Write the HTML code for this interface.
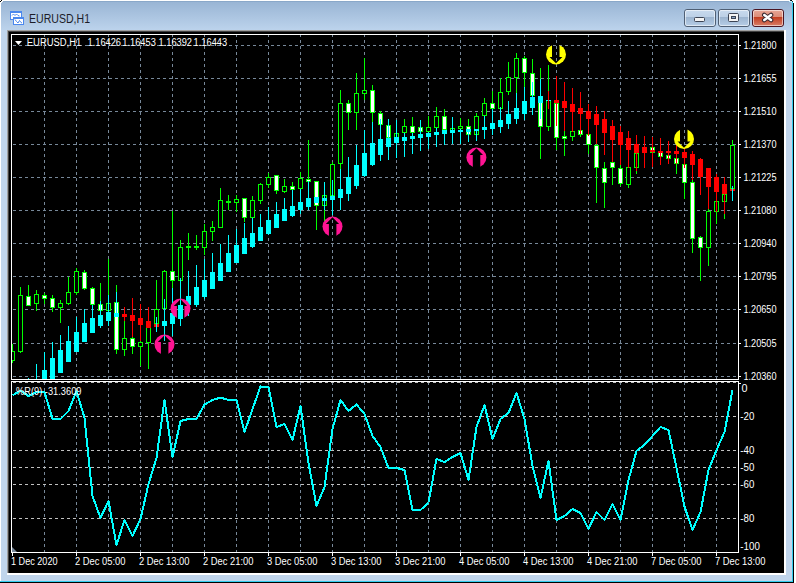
<!DOCTYPE html>
<html><head><meta charset="utf-8"><style>
html,body{margin:0;padding:0;width:796px;height:583px;overflow:hidden;background:#000}
svg{display:block}
</style></head><body>
<svg width="796" height="583" viewBox="0 0 796 583">
<defs>
<linearGradient id="tg" x1="0" y1="0" x2="0" y2="1">
<stop offset="0" stop-color="#97b3d3"/><stop offset="1" stop-color="#bcd3ec"/></linearGradient>
<linearGradient id="bt" x1="0" y1="0" x2="0" y2="1">
<stop offset="0" stop-color="#c8daee"/><stop offset="0.45" stop-color="#bcd0e6"/><stop offset="0.47" stop-color="#9db5d0"/><stop offset="1" stop-color="#b8cfe8"/></linearGradient>
<linearGradient id="ct" x1="0" y1="0" x2="0" y2="1">
<stop offset="0" stop-color="#e9a898"/><stop offset="0.45" stop-color="#db8c78"/><stop offset="0.47" stop-color="#c43f22"/><stop offset="1" stop-color="#d9826c"/></linearGradient>
<clipPath id="mainclip"><rect x="12" y="35" width="726" height="344"/></clipPath>
<clipPath id="subclip"><rect x="12" y="382" width="726" height="170"/></clipPath>
</defs>
<rect x="0" y="0" width="796" height="583" fill="#c0d5ec"/><rect x="0" y="0" width="796" height="30" fill="url(#tg)"/><rect x="0" y="0" width="796" height="1" fill="#ffffff"/><rect x="0" y="1" width="796" height="1" fill="#8aa8c9"/><rect x="0" y="0" width="1" height="583" fill="#ffffff"/><rect x="0" y="581" width="796" height="1" fill="#33ccee"/><rect x="792" y="0" width="1" height="582" fill="#33ccee"/><rect x="0" y="582" width="796" height="1" fill="#000000"/><rect x="793" y="0" width="1" height="583" fill="#000000"/><rect x="794" y="0" width="2" height="583" fill="#ffffff"/><rect x="1" y="0" width="1" height="1" fill="#000000"/><rect x="0" y="1" width="1" height="1" fill="#000000"/><rect x="1" y="1" width="2" height="1" fill="#f0f4f8"/><rect x="1" y="2" width="1" height="1" fill="#f0f4f8"/><rect x="792" y="0" width="2" height="2" fill="#ffffff"/><rect x="793" y="2" width="1" height="1" fill="#ffffff"/><rect x="792" y="1" width="1" height="1" fill="#104048"/><rect x="790" y="0" width="1" height="1" fill="#0a2a30"/><rect x="791" y="0" width="1" height="1" fill="#000000"/><rect x="789" y="1" width="3" height="1" fill="#c0f0ff"/><rect x="791" y="2" width="1" height="1" fill="#90e8f8"/><rect x="7" y="30" width="778" height="1" fill="#a0a0a0"/><rect x="7" y="30" width="1" height="544" fill="#a0a0a0"/><rect x="8" y="31" width="776" height="1" fill="#404040"/><rect x="8" y="31" width="1" height="542" fill="#404040"/><rect x="784" y="30" width="2" height="545" fill="#ffffff"/><rect x="7" y="573" width="779" height="2" fill="#ffffff"/><rect x="9" y="32" width="775" height="541" fill="#000000"/><text x="29" y="23" font-family="Liberation Sans" font-size="12.3" fill="#1c1c28" textLength="61" lengthAdjust="spacingAndGlyphs">EURUSD,H1</text><g shape-rendering="crispEdges"><rect x="10" y="11" width="12" height="9" fill="#4a88ee"/><rect x="11" y="13" width="10" height="6" fill="#ffffff"/><rect x="13" y="17" width="11" height="8" fill="#4a88ee"/><rect x="14" y="19" width="9" height="5" fill="#ffffff"/></g><polyline points="12,15.5 13.5,14 15,15.5 16.5,14 18,15.5 19.5,16" fill="none" stroke="#4a88ee" stroke-width="1"/><polyline points="15,19.5 16.5,21.5 18,23 19.5,20.5 21,22.5 22,23" fill="none" stroke="#4a88ee" stroke-width="1"/><rect x="684.5" y="9.5" width="31" height="17" rx="2.5" ry="2.5" fill="url(#bt)" stroke="#4f5f74" stroke-width="1"/><rect x="685.5" y="10.5" width="29" height="15" rx="1.5" ry="1.5" fill="none" stroke="rgba(255,255,255,0.55)" stroke-width="1"/><rect x="718.5" y="9.5" width="31" height="17" rx="2.5" ry="2.5" fill="url(#bt)" stroke="#4f5f74" stroke-width="1"/><rect x="719.5" y="10.5" width="29" height="15" rx="1.5" ry="1.5" fill="none" stroke="rgba(255,255,255,0.55)" stroke-width="1"/><rect x="752.5" y="9.5" width="31" height="17" rx="2.5" ry="2.5" fill="url(#ct)" stroke="#4a1522" stroke-width="1"/><rect x="753.5" y="10.5" width="29" height="15" rx="1.5" ry="1.5" fill="none" stroke="rgba(255,255,255,0.55)" stroke-width="1"/><rect x="694.5" y="17.5" width="10" height="4" rx="1" fill="#f4f4f4" stroke="#3c4454" stroke-width="1"/><rect x="728.5" y="13.5" width="10" height="8" rx="1" fill="#f4f4f4" stroke="#3c4454" stroke-width="1"/><rect x="731.5" y="16.5" width="4" height="2" fill="#8aa4c4" stroke="#3c4454" stroke-width="1"/><path d="M764.3,15 L771,20 M771,15 L764.3,20" stroke="#3a2a30" stroke-width="4.6" stroke-linecap="round"/><path d="M764.3,15 L771,20 M771,15 L764.3,20" stroke="#ffffff" stroke-width="2.6" stroke-linecap="round"/><g shape-rendering="crispEdges"><line x1="13" y1="45.5" x2="738" y2="45.5" stroke="#778899" stroke-width="1" stroke-dasharray="3 3"/><line x1="13" y1="78.5" x2="738" y2="78.5" stroke="#778899" stroke-width="1" stroke-dasharray="3 3"/><line x1="13" y1="111.5" x2="738" y2="111.5" stroke="#778899" stroke-width="1" stroke-dasharray="3 3"/><line x1="13" y1="144.5" x2="738" y2="144.5" stroke="#778899" stroke-width="1" stroke-dasharray="3 3"/><line x1="13" y1="177.5" x2="738" y2="177.5" stroke="#778899" stroke-width="1" stroke-dasharray="3 3"/><line x1="13" y1="210.5" x2="738" y2="210.5" stroke="#778899" stroke-width="1" stroke-dasharray="3 3"/><line x1="13" y1="243.5" x2="738" y2="243.5" stroke="#778899" stroke-width="1" stroke-dasharray="3 3"/><line x1="13" y1="276.5" x2="738" y2="276.5" stroke="#778899" stroke-width="1" stroke-dasharray="3 3"/><line x1="13" y1="309.5" x2="738" y2="309.5" stroke="#778899" stroke-width="1" stroke-dasharray="3 3"/><line x1="13" y1="343.5" x2="738" y2="343.5" stroke="#778899" stroke-width="1" stroke-dasharray="3 3"/><line x1="13" y1="376.5" x2="738" y2="376.5" stroke="#778899" stroke-width="1" stroke-dasharray="3 3"/><line x1="44.5" y1="35" x2="44.5" y2="379" stroke="#778899" stroke-width="1" stroke-dasharray="3 3" stroke-dashoffset="1"/><line x1="76.5" y1="35" x2="76.5" y2="379" stroke="#778899" stroke-width="1" stroke-dasharray="3 3" stroke-dashoffset="1"/><line x1="108.5" y1="35" x2="108.5" y2="379" stroke="#778899" stroke-width="1" stroke-dasharray="3 3" stroke-dashoffset="1"/><line x1="140.5" y1="35" x2="140.5" y2="379" stroke="#778899" stroke-width="1" stroke-dasharray="3 3" stroke-dashoffset="1"/><line x1="172.5" y1="35" x2="172.5" y2="379" stroke="#778899" stroke-width="1" stroke-dasharray="3 3" stroke-dashoffset="1"/><line x1="204.5" y1="35" x2="204.5" y2="379" stroke="#778899" stroke-width="1" stroke-dasharray="3 3" stroke-dashoffset="1"/><line x1="236.5" y1="35" x2="236.5" y2="379" stroke="#778899" stroke-width="1" stroke-dasharray="3 3" stroke-dashoffset="1"/><line x1="268.5" y1="35" x2="268.5" y2="379" stroke="#778899" stroke-width="1" stroke-dasharray="3 3" stroke-dashoffset="1"/><line x1="300.5" y1="35" x2="300.5" y2="379" stroke="#778899" stroke-width="1" stroke-dasharray="3 3" stroke-dashoffset="1"/><line x1="332.5" y1="35" x2="332.5" y2="379" stroke="#778899" stroke-width="1" stroke-dasharray="3 3" stroke-dashoffset="1"/><line x1="364.5" y1="35" x2="364.5" y2="379" stroke="#778899" stroke-width="1" stroke-dasharray="3 3" stroke-dashoffset="1"/><line x1="396.5" y1="35" x2="396.5" y2="379" stroke="#778899" stroke-width="1" stroke-dasharray="3 3" stroke-dashoffset="1"/><line x1="428.5" y1="35" x2="428.5" y2="379" stroke="#778899" stroke-width="1" stroke-dasharray="3 3" stroke-dashoffset="1"/><line x1="460.5" y1="35" x2="460.5" y2="379" stroke="#778899" stroke-width="1" stroke-dasharray="3 3" stroke-dashoffset="1"/><line x1="492.5" y1="35" x2="492.5" y2="379" stroke="#778899" stroke-width="1" stroke-dasharray="3 3" stroke-dashoffset="1"/><line x1="524.5" y1="35" x2="524.5" y2="379" stroke="#778899" stroke-width="1" stroke-dasharray="3 3" stroke-dashoffset="1"/><line x1="556.5" y1="35" x2="556.5" y2="379" stroke="#778899" stroke-width="1" stroke-dasharray="3 3" stroke-dashoffset="1"/><line x1="588.5" y1="35" x2="588.5" y2="379" stroke="#778899" stroke-width="1" stroke-dasharray="3 3" stroke-dashoffset="1"/><line x1="620.5" y1="35" x2="620.5" y2="379" stroke="#778899" stroke-width="1" stroke-dasharray="3 3" stroke-dashoffset="1"/><line x1="652.5" y1="35" x2="652.5" y2="379" stroke="#778899" stroke-width="1" stroke-dasharray="3 3" stroke-dashoffset="1"/><line x1="684.5" y1="35" x2="684.5" y2="379" stroke="#778899" stroke-width="1" stroke-dasharray="3 3" stroke-dashoffset="1"/><line x1="716.5" y1="35" x2="716.5" y2="379" stroke="#778899" stroke-width="1" stroke-dasharray="3 3" stroke-dashoffset="1"/><line x1="44.5" y1="382" x2="44.5" y2="552" stroke="#778899" stroke-width="1" stroke-dasharray="3 3" stroke-dashoffset="0"/><line x1="76.5" y1="382" x2="76.5" y2="552" stroke="#778899" stroke-width="1" stroke-dasharray="3 3" stroke-dashoffset="0"/><line x1="108.5" y1="382" x2="108.5" y2="552" stroke="#778899" stroke-width="1" stroke-dasharray="3 3" stroke-dashoffset="0"/><line x1="140.5" y1="382" x2="140.5" y2="552" stroke="#778899" stroke-width="1" stroke-dasharray="3 3" stroke-dashoffset="0"/><line x1="172.5" y1="382" x2="172.5" y2="552" stroke="#778899" stroke-width="1" stroke-dasharray="3 3" stroke-dashoffset="0"/><line x1="204.5" y1="382" x2="204.5" y2="552" stroke="#778899" stroke-width="1" stroke-dasharray="3 3" stroke-dashoffset="0"/><line x1="236.5" y1="382" x2="236.5" y2="552" stroke="#778899" stroke-width="1" stroke-dasharray="3 3" stroke-dashoffset="0"/><line x1="268.5" y1="382" x2="268.5" y2="552" stroke="#778899" stroke-width="1" stroke-dasharray="3 3" stroke-dashoffset="0"/><line x1="300.5" y1="382" x2="300.5" y2="552" stroke="#778899" stroke-width="1" stroke-dasharray="3 3" stroke-dashoffset="0"/><line x1="332.5" y1="382" x2="332.5" y2="552" stroke="#778899" stroke-width="1" stroke-dasharray="3 3" stroke-dashoffset="0"/><line x1="364.5" y1="382" x2="364.5" y2="552" stroke="#778899" stroke-width="1" stroke-dasharray="3 3" stroke-dashoffset="0"/><line x1="396.5" y1="382" x2="396.5" y2="552" stroke="#778899" stroke-width="1" stroke-dasharray="3 3" stroke-dashoffset="0"/><line x1="428.5" y1="382" x2="428.5" y2="552" stroke="#778899" stroke-width="1" stroke-dasharray="3 3" stroke-dashoffset="0"/><line x1="460.5" y1="382" x2="460.5" y2="552" stroke="#778899" stroke-width="1" stroke-dasharray="3 3" stroke-dashoffset="0"/><line x1="492.5" y1="382" x2="492.5" y2="552" stroke="#778899" stroke-width="1" stroke-dasharray="3 3" stroke-dashoffset="0"/><line x1="524.5" y1="382" x2="524.5" y2="552" stroke="#778899" stroke-width="1" stroke-dasharray="3 3" stroke-dashoffset="0"/><line x1="556.5" y1="382" x2="556.5" y2="552" stroke="#778899" stroke-width="1" stroke-dasharray="3 3" stroke-dashoffset="0"/><line x1="588.5" y1="382" x2="588.5" y2="552" stroke="#778899" stroke-width="1" stroke-dasharray="3 3" stroke-dashoffset="0"/><line x1="620.5" y1="382" x2="620.5" y2="552" stroke="#778899" stroke-width="1" stroke-dasharray="3 3" stroke-dashoffset="0"/><line x1="652.5" y1="382" x2="652.5" y2="552" stroke="#778899" stroke-width="1" stroke-dasharray="3 3" stroke-dashoffset="0"/><line x1="684.5" y1="382" x2="684.5" y2="552" stroke="#778899" stroke-width="1" stroke-dasharray="3 3" stroke-dashoffset="0"/><line x1="716.5" y1="382" x2="716.5" y2="552" stroke="#778899" stroke-width="1" stroke-dasharray="3 3" stroke-dashoffset="0"/><line x1="13" y1="382.5" x2="738" y2="382.5" stroke="#c0c0c0" stroke-width="1" stroke-dasharray="3 3"/><line x1="13" y1="416.5" x2="738" y2="416.5" stroke="#c0c0c0" stroke-width="1" stroke-dasharray="3 3"/><line x1="13" y1="450.5" x2="738" y2="450.5" stroke="#c0c0c0" stroke-width="1" stroke-dasharray="3 3"/><line x1="13" y1="467.5" x2="738" y2="467.5" stroke="#c0c0c0" stroke-width="1" stroke-dasharray="3 3"/><line x1="13" y1="484.5" x2="738" y2="484.5" stroke="#c0c0c0" stroke-width="1" stroke-dasharray="3 3"/><line x1="13" y1="518.5" x2="738" y2="518.5" stroke="#c0c0c0" stroke-width="1" stroke-dasharray="3 3"/></g><g clip-path="url(#mainclip)" shape-rendering="crispEdges"><rect x="12" y="344" width="1" height="19" fill="#00ff00"/><rect x="10" y="351" width="5" height="10" fill="#00ff00"/><rect x="11" y="352" width="3" height="8" fill="#000000"/><rect x="20" y="287" width="1" height="66" fill="#00ff00"/><rect x="18" y="295" width="5" height="57" fill="#00ff00"/><rect x="19" y="296" width="3" height="55" fill="#000000"/><rect x="28" y="285" width="1" height="21" fill="#00ff00"/><rect x="26" y="296" width="5" height="10" fill="#00ff00"/><rect x="27" y="297" width="3" height="8" fill="#ffffff"/><rect x="36" y="290" width="1" height="21" fill="#00ff00"/><rect x="34" y="294" width="5" height="10" fill="#00ff00"/><rect x="35" y="295" width="3" height="8" fill="#000000"/><rect x="44" y="293" width="1" height="11" fill="#00ff00"/><rect x="42" y="295" width="5" height="4" fill="#00ff00"/><rect x="43" y="296" width="3" height="2" fill="#ffffff"/><rect x="52" y="295" width="1" height="17" fill="#00ff00"/><rect x="50" y="298" width="5" height="10" fill="#00ff00"/><rect x="51" y="299" width="3" height="8" fill="#ffffff"/><rect x="60" y="300" width="1" height="23" fill="#00ff00"/><rect x="58" y="303" width="5" height="5" fill="#00ff00"/><rect x="59" y="304" width="3" height="3" fill="#000000"/><rect x="68" y="277" width="1" height="28" fill="#00ff00"/><rect x="66" y="292" width="5" height="12" fill="#00ff00"/><rect x="67" y="293" width="3" height="10" fill="#000000"/><rect x="76" y="268" width="1" height="27" fill="#00ff00"/><rect x="74" y="271" width="5" height="22" fill="#00ff00"/><rect x="75" y="272" width="3" height="20" fill="#000000"/><rect x="84" y="270" width="1" height="20" fill="#00ff00"/><rect x="82" y="272" width="5" height="17" fill="#00ff00"/><rect x="83" y="273" width="3" height="15" fill="#ffffff"/><rect x="92" y="287" width="1" height="31" fill="#00ff00"/><rect x="90" y="288" width="5" height="17" fill="#00ff00"/><rect x="91" y="289" width="3" height="15" fill="#ffffff"/><rect x="100" y="283" width="1" height="45" fill="#00ff00"/><rect x="98" y="304" width="5" height="7" fill="#00ff00"/><rect x="99" y="305" width="3" height="5" fill="#ffffff"/><rect x="108" y="259" width="1" height="66" fill="#00ff00"/><rect x="106" y="303" width="5" height="8" fill="#00ff00"/><rect x="107" y="304" width="3" height="6" fill="#000000"/><rect x="116" y="285" width="1" height="69" fill="#00ff00"/><rect x="114" y="302" width="5" height="48" fill="#00ff00"/><rect x="115" y="303" width="3" height="46" fill="#ffffff"/><rect x="124" y="307" width="1" height="49" fill="#00ff00"/><rect x="122" y="338" width="5" height="12" fill="#00ff00"/><rect x="123" y="339" width="3" height="10" fill="#000000"/><rect x="132" y="298" width="1" height="56" fill="#00ff00"/><rect x="130" y="338" width="5" height="9" fill="#00ff00"/><rect x="131" y="339" width="3" height="7" fill="#ffffff"/><rect x="140" y="304" width="1" height="62" fill="#00ff00"/><rect x="138" y="342" width="5" height="5" fill="#00ff00"/><rect x="139" y="343" width="3" height="3" fill="#000000"/><rect x="148" y="307" width="1" height="62" fill="#00ff00"/><rect x="146" y="321" width="5" height="22" fill="#00ff00"/><rect x="147" y="322" width="3" height="20" fill="#000000"/><rect x="156" y="280" width="1" height="52" fill="#00ff00"/><rect x="154" y="309" width="5" height="15" fill="#00ff00"/><rect x="155" y="310" width="3" height="13" fill="#000000"/><rect x="164" y="270" width="1" height="71" fill="#00ff00"/><rect x="162" y="271" width="5" height="38" fill="#00ff00"/><rect x="163" y="272" width="3" height="36" fill="#000000"/><rect x="172" y="211" width="1" height="125" fill="#00ff00"/><rect x="170" y="271" width="5" height="10" fill="#00ff00"/><rect x="171" y="272" width="3" height="8" fill="#ffffff"/><rect x="180" y="240" width="1" height="86" fill="#00ff00"/><rect x="178" y="247" width="5" height="34" fill="#00ff00"/><rect x="179" y="248" width="3" height="32" fill="#000000"/><rect x="188" y="233" width="1" height="27" fill="#00ff00"/><rect x="186" y="246" width="5" height="2" fill="#00ff00"/><rect x="196" y="235" width="1" height="15" fill="#00ff00"/><rect x="194" y="246" width="5" height="2" fill="#00ff00"/><rect x="204" y="224" width="1" height="31" fill="#00ff00"/><rect x="202" y="231" width="5" height="17" fill="#00ff00"/><rect x="203" y="232" width="3" height="15" fill="#000000"/><rect x="212" y="221" width="1" height="20" fill="#00ff00"/><rect x="210" y="227" width="5" height="5" fill="#00ff00"/><rect x="211" y="228" width="3" height="3" fill="#000000"/><rect x="220" y="188" width="1" height="40" fill="#00ff00"/><rect x="218" y="200" width="5" height="28" fill="#00ff00"/><rect x="219" y="201" width="3" height="26" fill="#000000"/><rect x="228" y="195" width="1" height="15" fill="#00ff00"/><rect x="226" y="201" width="5" height="2" fill="#00ff00"/><rect x="236" y="195" width="1" height="17" fill="#00ff00"/><rect x="234" y="199" width="5" height="4" fill="#00ff00"/><rect x="235" y="200" width="3" height="2" fill="#000000"/><rect x="244" y="198" width="1" height="24" fill="#00ff00"/><rect x="242" y="198" width="5" height="20" fill="#00ff00"/><rect x="243" y="199" width="3" height="18" fill="#ffffff"/><rect x="252" y="196" width="1" height="26" fill="#00ff00"/><rect x="250" y="200" width="5" height="18" fill="#00ff00"/><rect x="251" y="201" width="3" height="16" fill="#000000"/><rect x="260" y="183" width="1" height="21" fill="#00ff00"/><rect x="258" y="184" width="5" height="17" fill="#00ff00"/><rect x="259" y="185" width="3" height="15" fill="#000000"/><rect x="268" y="173" width="1" height="15" fill="#00ff00"/><rect x="266" y="177" width="5" height="8" fill="#00ff00"/><rect x="267" y="178" width="3" height="6" fill="#000000"/><rect x="276" y="175" width="1" height="19" fill="#00ff00"/><rect x="274" y="175" width="5" height="16" fill="#00ff00"/><rect x="275" y="176" width="3" height="14" fill="#ffffff"/><rect x="284" y="179" width="1" height="14" fill="#00ff00"/><rect x="282" y="186" width="5" height="6" fill="#00ff00"/><rect x="283" y="187" width="3" height="4" fill="#000000"/><rect x="292" y="182" width="1" height="13" fill="#00ff00"/><rect x="290" y="186" width="5" height="4" fill="#00ff00"/><rect x="291" y="187" width="3" height="2" fill="#ffffff"/><rect x="300" y="172" width="1" height="17" fill="#00ff00"/><rect x="298" y="178" width="5" height="11" fill="#00ff00"/><rect x="299" y="179" width="3" height="9" fill="#000000"/><rect x="308" y="140" width="1" height="42" fill="#00ff00"/><rect x="306" y="179" width="5" height="3" fill="#00ff00"/><rect x="307" y="180" width="3" height="1" fill="#ffffff"/><rect x="316" y="181" width="1" height="49" fill="#00ff00"/><rect x="314" y="181" width="5" height="25" fill="#00ff00"/><rect x="315" y="182" width="3" height="23" fill="#ffffff"/><rect x="324" y="182" width="1" height="39" fill="#00ff00"/><rect x="322" y="195" width="5" height="11" fill="#00ff00"/><rect x="323" y="196" width="3" height="9" fill="#000000"/><rect x="332" y="162" width="1" height="34" fill="#00ff00"/><rect x="330" y="164" width="5" height="32" fill="#00ff00"/><rect x="331" y="165" width="3" height="30" fill="#000000"/><rect x="340" y="90" width="1" height="79" fill="#00ff00"/><rect x="338" y="103" width="5" height="61" fill="#00ff00"/><rect x="339" y="104" width="3" height="59" fill="#000000"/><rect x="348" y="100" width="1" height="30" fill="#00ff00"/><rect x="346" y="103" width="5" height="10" fill="#00ff00"/><rect x="347" y="104" width="3" height="8" fill="#ffffff"/><rect x="356" y="73" width="1" height="57" fill="#00ff00"/><rect x="354" y="93" width="5" height="20" fill="#00ff00"/><rect x="355" y="94" width="3" height="18" fill="#000000"/><rect x="364" y="58" width="1" height="42" fill="#00ff00"/><rect x="362" y="90" width="5" height="4" fill="#00ff00"/><rect x="363" y="91" width="3" height="2" fill="#000000"/><rect x="372" y="85" width="1" height="37" fill="#00ff00"/><rect x="370" y="90" width="5" height="23" fill="#00ff00"/><rect x="371" y="91" width="3" height="21" fill="#ffffff"/><rect x="380" y="111" width="1" height="14" fill="#00ff00"/><rect x="378" y="113" width="5" height="12" fill="#00ff00"/><rect x="379" y="114" width="3" height="10" fill="#ffffff"/><rect x="388" y="119" width="1" height="19" fill="#00ff00"/><rect x="386" y="125" width="5" height="13" fill="#00ff00"/><rect x="387" y="126" width="3" height="11" fill="#ffffff"/><rect x="396" y="120" width="1" height="22" fill="#00ff00"/><rect x="394" y="133" width="5" height="9" fill="#00ff00"/><rect x="395" y="134" width="3" height="7" fill="#000000"/><rect x="404" y="119" width="1" height="14" fill="#00ff00"/><rect x="402" y="126" width="5" height="7" fill="#00ff00"/><rect x="403" y="127" width="3" height="5" fill="#000000"/><rect x="412" y="117" width="1" height="16" fill="#00ff00"/><rect x="410" y="126" width="5" height="7" fill="#00ff00"/><rect x="411" y="127" width="3" height="5" fill="#ffffff"/><rect x="420" y="120" width="1" height="12" fill="#00ff00"/><rect x="418" y="127" width="5" height="5" fill="#00ff00"/><rect x="419" y="128" width="3" height="3" fill="#ffffff"/><rect x="428" y="116" width="1" height="16" fill="#00ff00"/><rect x="426" y="127" width="5" height="5" fill="#00ff00"/><rect x="427" y="128" width="3" height="3" fill="#000000"/><rect x="436" y="107" width="1" height="21" fill="#00ff00"/><rect x="434" y="116" width="5" height="12" fill="#00ff00"/><rect x="435" y="117" width="3" height="10" fill="#000000"/><rect x="444" y="109" width="1" height="21" fill="#00ff00"/><rect x="442" y="116" width="5" height="14" fill="#00ff00"/><rect x="443" y="117" width="3" height="12" fill="#ffffff"/><rect x="452" y="117" width="1" height="16" fill="#00ff00"/><rect x="450" y="128" width="5" height="5" fill="#00ff00"/><rect x="451" y="129" width="3" height="3" fill="#000000"/><rect x="460" y="118" width="1" height="11" fill="#00ff00"/><rect x="458" y="126" width="5" height="3" fill="#00ff00"/><rect x="459" y="127" width="3" height="1" fill="#000000"/><rect x="468" y="119" width="1" height="16" fill="#00ff00"/><rect x="466" y="126" width="5" height="9" fill="#00ff00"/><rect x="467" y="127" width="3" height="7" fill="#ffffff"/><rect x="476" y="113" width="1" height="22" fill="#00ff00"/><rect x="474" y="116" width="5" height="19" fill="#00ff00"/><rect x="475" y="117" width="3" height="17" fill="#000000"/><rect x="484" y="98" width="1" height="18" fill="#00ff00"/><rect x="482" y="103" width="5" height="13" fill="#00ff00"/><rect x="483" y="104" width="3" height="11" fill="#000000"/><rect x="492" y="91" width="1" height="20" fill="#00ff00"/><rect x="490" y="103" width="5" height="6" fill="#00ff00"/><rect x="491" y="104" width="3" height="4" fill="#ffffff"/><rect x="500" y="78" width="1" height="31" fill="#00ff00"/><rect x="498" y="92" width="5" height="17" fill="#00ff00"/><rect x="499" y="93" width="3" height="15" fill="#000000"/><rect x="508" y="62" width="1" height="33" fill="#00ff00"/><rect x="506" y="77" width="5" height="15" fill="#00ff00"/><rect x="507" y="78" width="3" height="13" fill="#000000"/><rect x="516" y="53" width="1" height="40" fill="#00ff00"/><rect x="514" y="58" width="5" height="20" fill="#00ff00"/><rect x="515" y="59" width="3" height="18" fill="#000000"/><rect x="524" y="56" width="1" height="31" fill="#00ff00"/><rect x="522" y="58" width="5" height="15" fill="#00ff00"/><rect x="523" y="59" width="3" height="13" fill="#ffffff"/><rect x="532" y="59" width="1" height="37" fill="#00ff00"/><rect x="530" y="73" width="5" height="23" fill="#00ff00"/><rect x="531" y="74" width="3" height="21" fill="#ffffff"/><rect x="540" y="68" width="1" height="91" fill="#00ff00"/><rect x="538" y="96" width="5" height="31" fill="#00ff00"/><rect x="539" y="97" width="3" height="29" fill="#ffffff"/><rect x="548" y="65" width="1" height="66" fill="#00ff00"/><rect x="546" y="100" width="5" height="27" fill="#00ff00"/><rect x="547" y="101" width="3" height="25" fill="#000000"/><rect x="556" y="76" width="1" height="74" fill="#00ff00"/><rect x="554" y="103" width="5" height="35" fill="#00ff00"/><rect x="555" y="104" width="3" height="33" fill="#ffffff"/><rect x="564" y="82" width="1" height="74" fill="#00ff00"/><rect x="562" y="136" width="5" height="3" fill="#00ff00"/><rect x="563" y="137" width="3" height="1" fill="#ffffff"/><rect x="572" y="88" width="1" height="53" fill="#00ff00"/><rect x="570" y="131" width="5" height="6" fill="#00ff00"/><rect x="571" y="132" width="3" height="4" fill="#000000"/><rect x="580" y="92" width="1" height="45" fill="#00ff00"/><rect x="578" y="130" width="5" height="5" fill="#00ff00"/><rect x="579" y="131" width="3" height="3" fill="#ffffff"/><rect x="588" y="110" width="1" height="44" fill="#00ff00"/><rect x="586" y="134" width="5" height="11" fill="#00ff00"/><rect x="587" y="135" width="3" height="9" fill="#ffffff"/><rect x="596" y="114" width="1" height="89" fill="#00ff00"/><rect x="594" y="145" width="5" height="23" fill="#00ff00"/><rect x="595" y="146" width="3" height="21" fill="#ffffff"/><rect x="604" y="162" width="1" height="46" fill="#00ff00"/><rect x="602" y="168" width="5" height="15" fill="#00ff00"/><rect x="603" y="169" width="3" height="13" fill="#ffffff"/><rect x="612" y="161" width="1" height="24" fill="#00ff00"/><rect x="610" y="162" width="5" height="6" fill="#00ff00"/><rect x="611" y="163" width="3" height="4" fill="#ffffff"/><rect x="620" y="165" width="1" height="21" fill="#00ff00"/><rect x="618" y="168" width="5" height="16" fill="#00ff00"/><rect x="619" y="169" width="3" height="14" fill="#ffffff"/><rect x="628" y="167" width="1" height="21" fill="#00ff00"/><rect x="626" y="167" width="5" height="18" fill="#00ff00"/><rect x="627" y="168" width="3" height="16" fill="#000000"/><rect x="636" y="153" width="1" height="21" fill="#00ff00"/><rect x="634" y="153" width="5" height="15" fill="#00ff00"/><rect x="635" y="154" width="3" height="13" fill="#000000"/><rect x="644" y="147" width="1" height="21" fill="#00ff00"/><rect x="642" y="147" width="5" height="6" fill="#00ff00"/><rect x="643" y="148" width="3" height="4" fill="#000000"/><rect x="652" y="147" width="1" height="20" fill="#00ff00"/><rect x="650" y="147" width="5" height="6" fill="#00ff00"/><rect x="651" y="148" width="3" height="4" fill="#ffffff"/><rect x="660" y="152" width="1" height="13" fill="#00ff00"/><rect x="658" y="152" width="5" height="5" fill="#00ff00"/><rect x="659" y="153" width="3" height="3" fill="#ffffff"/><rect x="668" y="155" width="1" height="9" fill="#00ff00"/><rect x="666" y="155" width="5" height="4" fill="#00ff00"/><rect x="667" y="156" width="3" height="2" fill="#ffffff"/><rect x="676" y="158" width="1" height="16" fill="#00ff00"/><rect x="674" y="158" width="5" height="6" fill="#00ff00"/><rect x="675" y="159" width="3" height="4" fill="#ffffff"/><rect x="684" y="164" width="1" height="35" fill="#00ff00"/><rect x="682" y="164" width="5" height="19" fill="#00ff00"/><rect x="683" y="165" width="3" height="17" fill="#ffffff"/><rect x="692" y="180" width="1" height="73" fill="#00ff00"/><rect x="690" y="182" width="5" height="57" fill="#00ff00"/><rect x="691" y="183" width="3" height="55" fill="#ffffff"/><rect x="700" y="236" width="1" height="45" fill="#00ff00"/><rect x="698" y="237" width="5" height="11" fill="#00ff00"/><rect x="699" y="238" width="3" height="9" fill="#ffffff"/><rect x="708" y="208" width="1" height="58" fill="#00ff00"/><rect x="706" y="211" width="5" height="37" fill="#00ff00"/><rect x="707" y="212" width="3" height="35" fill="#000000"/><rect x="716" y="201" width="1" height="23" fill="#00ff00"/><rect x="714" y="201" width="5" height="11" fill="#00ff00"/><rect x="715" y="202" width="3" height="9" fill="#000000"/><rect x="724" y="194" width="1" height="25" fill="#00ff00"/><rect x="722" y="194" width="5" height="8" fill="#00ff00"/><rect x="723" y="195" width="3" height="6" fill="#000000"/><rect x="732" y="140" width="1" height="49" fill="#00ff00"/><rect x="730" y="145" width="5" height="44" fill="#00ff00"/><rect x="731" y="146" width="3" height="42" fill="#000000"/><rect x="26" y="380" width="5" height="10" fill="#00ffff"/><rect x="28" y="378" width="1" height="12" fill="#00ffff"/><rect x="34" y="380" width="5" height="10" fill="#00ffff"/><rect x="36" y="364" width="1" height="26" fill="#00ffff"/><rect x="42" y="370" width="5" height="15" fill="#00ffff"/><rect x="44" y="352" width="1" height="33" fill="#00ffff"/><rect x="50" y="358" width="5" height="22" fill="#00ffff"/><rect x="52" y="342" width="1" height="38" fill="#00ffff"/><rect x="58" y="350" width="5" height="23" fill="#00ffff"/><rect x="60" y="335" width="1" height="38" fill="#00ffff"/><rect x="66" y="341" width="5" height="21" fill="#00ffff"/><rect x="68" y="326" width="1" height="36" fill="#00ffff"/><rect x="74" y="332" width="5" height="20" fill="#00ffff"/><rect x="76" y="317" width="1" height="35" fill="#00ffff"/><rect x="82" y="323" width="5" height="19" fill="#00ffff"/><rect x="84" y="309" width="1" height="33" fill="#00ffff"/><rect x="90" y="318" width="5" height="15" fill="#00ffff"/><rect x="92" y="305" width="1" height="28" fill="#00ffff"/><rect x="98" y="315" width="5" height="11" fill="#00ffff"/><rect x="100" y="301" width="1" height="27" fill="#00ffff"/><rect x="106" y="312" width="5" height="9" fill="#00ffff"/><rect x="108" y="295" width="1" height="31" fill="#00ffff"/><rect x="114" y="313" width="5" height="4" fill="#00ffff"/><rect x="116" y="292" width="1" height="25" fill="#00ffff"/><rect x="122" y="314" width="5" height="3" fill="#ff0000"/><rect x="124" y="307" width="1" height="14" fill="#ff0000"/><rect x="130" y="315" width="5" height="6" fill="#ff0000"/><rect x="132" y="298" width="1" height="39" fill="#ff0000"/><rect x="138" y="318" width="5" height="7" fill="#ff0000"/><rect x="140" y="304" width="1" height="37" fill="#ff0000"/><rect x="146" y="321" width="5" height="7" fill="#ff0000"/><rect x="148" y="307" width="1" height="21" fill="#ff0000"/><rect x="154" y="324" width="5" height="3" fill="#ff0000"/><rect x="156" y="317" width="1" height="15" fill="#00ffff"/><rect x="162" y="321" width="5" height="5" fill="#00ffff"/><rect x="164" y="299" width="1" height="42" fill="#00ffff"/><rect x="170" y="313" width="5" height="11" fill="#00ffff"/><rect x="172" y="288" width="1" height="48" fill="#00ffff"/><rect x="178" y="305" width="5" height="14" fill="#00ffff"/><rect x="180" y="278" width="1" height="48" fill="#00ffff"/><rect x="186" y="296" width="5" height="9" fill="#00ffff"/><rect x="188" y="271" width="1" height="45" fill="#00ffff"/><rect x="194" y="287" width="5" height="18" fill="#00ffff"/><rect x="196" y="265" width="1" height="42" fill="#00ffff"/><rect x="202" y="280" width="5" height="17" fill="#00ffff"/><rect x="204" y="259" width="1" height="40" fill="#00ffff"/><rect x="210" y="272" width="5" height="17" fill="#00ffff"/><rect x="212" y="253" width="1" height="36" fill="#00ffff"/><rect x="218" y="263" width="5" height="18" fill="#00ffff"/><rect x="220" y="244" width="1" height="37" fill="#00ffff"/><rect x="226" y="253" width="5" height="19" fill="#00ffff"/><rect x="228" y="235" width="1" height="37" fill="#00ffff"/><rect x="234" y="245" width="5" height="18" fill="#00ffff"/><rect x="236" y="229" width="1" height="34" fill="#00ffff"/><rect x="242" y="238" width="5" height="16" fill="#00ffff"/><rect x="244" y="223" width="1" height="31" fill="#00ffff"/><rect x="250" y="233" width="5" height="14" fill="#00ffff"/><rect x="252" y="218" width="1" height="30" fill="#00ffff"/><rect x="258" y="227" width="5" height="14" fill="#00ffff"/><rect x="260" y="214" width="1" height="27" fill="#00ffff"/><rect x="266" y="220" width="5" height="14" fill="#00ffff"/><rect x="268" y="207" width="1" height="28" fill="#00ffff"/><rect x="274" y="214" width="5" height="14" fill="#00ffff"/><rect x="276" y="202" width="1" height="26" fill="#00ffff"/><rect x="282" y="209" width="5" height="12" fill="#00ffff"/><rect x="284" y="198" width="1" height="23" fill="#00ffff"/><rect x="290" y="206" width="5" height="10" fill="#00ffff"/><rect x="292" y="190" width="1" height="27" fill="#00ffff"/><rect x="298" y="202" width="5" height="8" fill="#00ffff"/><rect x="300" y="189" width="1" height="25" fill="#00ffff"/><rect x="306" y="198" width="5" height="9" fill="#00ffff"/><rect x="308" y="181" width="1" height="29" fill="#00ffff"/><rect x="314" y="197" width="5" height="6" fill="#00ffff"/><rect x="316" y="197" width="1" height="6" fill="#00ffff"/><rect x="322" y="198" width="5" height="3" fill="#00ffff"/><rect x="324" y="182" width="1" height="28" fill="#00ffff"/><rect x="330" y="196" width="5" height="4" fill="#00ffff"/><rect x="332" y="180" width="1" height="35" fill="#00ffff"/><rect x="338" y="189" width="5" height="9" fill="#00ffff"/><rect x="340" y="169" width="1" height="41" fill="#00ffff"/><rect x="346" y="177" width="5" height="17" fill="#00ffff"/><rect x="348" y="157" width="1" height="44" fill="#00ffff"/><rect x="354" y="165" width="5" height="21" fill="#00ffff"/><rect x="356" y="145" width="1" height="44" fill="#00ffff"/><rect x="362" y="153" width="5" height="23" fill="#00ffff"/><rect x="364" y="130" width="1" height="47" fill="#00ffff"/><rect x="370" y="143" width="5" height="22" fill="#00ffff"/><rect x="372" y="122" width="1" height="44" fill="#00ffff"/><rect x="378" y="139" width="5" height="16" fill="#00ffff"/><rect x="380" y="119" width="1" height="42" fill="#00ffff"/><rect x="386" y="138" width="5" height="9" fill="#00ffff"/><rect x="388" y="119" width="1" height="41" fill="#00ffff"/><rect x="394" y="137" width="5" height="6" fill="#00ffff"/><rect x="396" y="120" width="1" height="38" fill="#00ffff"/><rect x="402" y="137" width="5" height="4" fill="#00ffff"/><rect x="404" y="133" width="1" height="24" fill="#00ffff"/><rect x="410" y="136" width="5" height="3" fill="#00ffff"/><rect x="412" y="133" width="1" height="21" fill="#00ffff"/><rect x="418" y="134" width="5" height="4" fill="#00ffff"/><rect x="420" y="120" width="1" height="31" fill="#00ffff"/><rect x="426" y="133" width="5" height="4" fill="#00ffff"/><rect x="428" y="132" width="1" height="17" fill="#00ffff"/><rect x="434" y="132" width="5" height="3" fill="#00ffff"/><rect x="436" y="128" width="1" height="19" fill="#00ffff"/><rect x="442" y="130" width="5" height="4" fill="#00ffff"/><rect x="444" y="130" width="1" height="15" fill="#00ffff"/><rect x="450" y="130" width="5" height="3" fill="#00ffff"/><rect x="452" y="117" width="1" height="27" fill="#00ffff"/><rect x="458" y="130" width="5" height="2" fill="#00ffff"/><rect x="460" y="129" width="1" height="15" fill="#00ffff"/><rect x="466" y="129" width="5" height="3" fill="#00ffff"/><rect x="468" y="129" width="1" height="13" fill="#00ffff"/><rect x="474" y="129" width="5" height="2" fill="#00ffff"/><rect x="476" y="129" width="1" height="12" fill="#00ffff"/><rect x="482" y="127" width="5" height="3" fill="#00ffff"/><rect x="484" y="116" width="1" height="23" fill="#00ffff"/><rect x="490" y="123" width="5" height="6" fill="#00ffff"/><rect x="492" y="109" width="1" height="26" fill="#00ffff"/><rect x="498" y="120" width="5" height="7" fill="#00ffff"/><rect x="500" y="107" width="1" height="26" fill="#00ffff"/><rect x="506" y="114" width="5" height="10" fill="#00ffff"/><rect x="508" y="101" width="1" height="28" fill="#00ffff"/><rect x="514" y="108" width="5" height="11" fill="#00ffff"/><rect x="516" y="93" width="1" height="31" fill="#00ffff"/><rect x="522" y="101" width="5" height="13" fill="#00ffff"/><rect x="524" y="87" width="1" height="33" fill="#00ffff"/><rect x="530" y="97" width="5" height="11" fill="#00ffff"/><rect x="532" y="82" width="1" height="33" fill="#00ffff"/><rect x="538" y="96" width="5" height="7" fill="#00ffff"/><rect x="540" y="79" width="1" height="40" fill="#00ffff"/><rect x="546" y="100" width="5" height="1" fill="#00ffff"/><rect x="548" y="91" width="1" height="18" fill="#ff0000"/><rect x="554" y="100" width="5" height="3" fill="#ff0000"/><rect x="556" y="76" width="1" height="50" fill="#ff0000"/><rect x="562" y="101" width="5" height="7" fill="#ff0000"/><rect x="564" y="82" width="1" height="49" fill="#ff0000"/><rect x="570" y="104" width="5" height="8" fill="#ff0000"/><rect x="572" y="88" width="1" height="44" fill="#ff0000"/><rect x="578" y="108" width="5" height="6" fill="#ff0000"/><rect x="580" y="92" width="1" height="42" fill="#ff0000"/><rect x="586" y="111" width="5" height="8" fill="#ff0000"/><rect x="588" y="104" width="1" height="32" fill="#ff0000"/><rect x="594" y="114" width="5" height="11" fill="#ff0000"/><rect x="596" y="106" width="1" height="38" fill="#ff0000"/><rect x="602" y="119" width="5" height="14" fill="#ff0000"/><rect x="604" y="111" width="1" height="44" fill="#ff0000"/><rect x="610" y="126" width="5" height="14" fill="#ff0000"/><rect x="612" y="120" width="1" height="42" fill="#ff0000"/><rect x="618" y="132" width="5" height="13" fill="#ff0000"/><rect x="620" y="126" width="1" height="39" fill="#ff0000"/><rect x="626" y="138" width="5" height="12" fill="#ff0000"/><rect x="628" y="131" width="1" height="37" fill="#ff0000"/><rect x="634" y="144" width="5" height="9" fill="#ff0000"/><rect x="636" y="135" width="1" height="36" fill="#ff0000"/><rect x="642" y="147" width="5" height="6" fill="#ff0000"/><rect x="644" y="136" width="1" height="32" fill="#ff0000"/><rect x="650" y="150" width="5" height="2" fill="#ff0000"/><rect x="652" y="137" width="1" height="30" fill="#ff0000"/><rect x="658" y="151" width="5" height="2" fill="#ff0000"/><rect x="660" y="138" width="1" height="27" fill="#ff0000"/><rect x="666" y="151" width="5" height="2" fill="#ff0000"/><rect x="668" y="141" width="1" height="23" fill="#ff0000"/><rect x="674" y="151" width="5" height="3" fill="#ff0000"/><rect x="676" y="143" width="1" height="21" fill="#ff0000"/><rect x="682" y="152" width="5" height="6" fill="#ff0000"/><rect x="684" y="149" width="1" height="19" fill="#ff0000"/><rect x="690" y="154" width="5" height="11" fill="#ff0000"/><rect x="692" y="151" width="1" height="29" fill="#ff0000"/><rect x="698" y="159" width="5" height="18" fill="#ff0000"/><rect x="700" y="158" width="1" height="37" fill="#ff0000"/><rect x="706" y="168" width="5" height="19" fill="#ff0000"/><rect x="708" y="168" width="1" height="41" fill="#ff0000"/><rect x="714" y="177" width="5" height="15" fill="#ff0000"/><rect x="716" y="174" width="1" height="38" fill="#ff0000"/><rect x="722" y="184" width="5" height="10" fill="#ff0000"/><rect x="724" y="177" width="1" height="37" fill="#ff0000"/><rect x="730" y="189" width="5" height="2" fill="#ff0000"/><rect x="732" y="186" width="1" height="15" fill="#00ffff"/></g><mask id="am1" maskUnits="userSpaceOnUse" x="168.5" y="296.5" width="24" height="24"><rect x="168.5" y="296.5" width="24" height="24" fill="#fff"/><path d="M180.5,299.2 L187.1,306.0 L184.4,306.0 L184.4,320.5 L176.9,320.5 L176.9,306.0 L173.8,306.0 Z" fill="#000"/></mask><circle cx="180.5" cy="308.5" r="10" fill="#ff1493" mask="url(#am1)"/><mask id="am2" maskUnits="userSpaceOnUse" x="152.5" y="332.5" width="24" height="24"><rect x="152.5" y="332.5" width="24" height="24" fill="#fff"/><path d="M164.5,335.2 L171.1,342.0 L168.4,342.0 L168.4,356.5 L160.9,356.5 L160.9,342.0 L157.8,342.0 Z" fill="#000"/></mask><circle cx="164.5" cy="344.5" r="10" fill="#ff1493" mask="url(#am2)"/><mask id="am3" maskUnits="userSpaceOnUse" x="320.5" y="214.5" width="24" height="24"><rect x="320.5" y="214.5" width="24" height="24" fill="#fff"/><path d="M332.5,217.2 L339.1,224.0 L336.4,224.0 L336.4,238.5 L328.9,238.5 L328.9,224.0 L325.8,224.0 Z" fill="#000"/></mask><circle cx="332.5" cy="226.5" r="10" fill="#ff1493" mask="url(#am3)"/><mask id="am4" maskUnits="userSpaceOnUse" x="464.4" y="145.5" width="24" height="24"><rect x="464.4" y="145.5" width="24" height="24" fill="#fff"/><path d="M476.4,148.2 L483.0,155.0 L480.29999999999995,155.0 L480.29999999999995,169.5 L472.79999999999995,169.5 L472.79999999999995,155.0 L469.7,155.0 Z" fill="#000"/></mask><circle cx="476.4" cy="157.5" r="10" fill="#ff1493" mask="url(#am4)"/><mask id="am5" maskUnits="userSpaceOnUse" x="544" y="42.4" width="24" height="24"><rect x="544" y="42.4" width="24" height="24" fill="#fff"/><path d="M556,63.2 L562.4,57.0 L559.5,57.0 L559.5,42.4 L552,42.4 L552,57.0 L549.5,57.0 Z" fill="#000"/></mask><circle cx="556" cy="54.4" r="10" fill="#ffff00" mask="url(#am5)"/><mask id="am6" maskUnits="userSpaceOnUse" x="672" y="127" width="24" height="24"><rect x="672" y="127" width="24" height="24" fill="#fff"/><path d="M684,147.8 L690.4,141.6 L687.5,141.6 L687.5,127 L680,127 L680,141.6 L677.5,141.6 Z" fill="#000"/></mask><circle cx="684" cy="139" r="10" fill="#ffff00" mask="url(#am6)"/><g clip-path="url(#subclip)"><polyline points="12.5,395.5 20.5,390.6 28.5,396 36.5,392 44.5,392 52.5,419 60.5,419 68.5,411 76.5,391 84.5,418 92.5,496 100.5,518 108.5,501 116.5,545 124.5,520 132.5,536 140.5,519 148.5,484 156.5,458 164.5,400 172.5,457 180.5,421 188.5,419 196.5,419 204.5,404.5 212.5,400 220.5,397.6 228.5,400 236.5,400 244.5,432 252.5,409 260.5,386.5 268.5,387 276.5,427 284.5,424 292.5,440 300.5,406 308.5,463 316.5,506 324.5,487 332.5,429 340.5,400 348.5,411 356.5,404.5 364.5,414 372.5,436 380.5,447 388.5,468 396.5,468 404.5,470 412.5,510 420.5,510 428.5,502.5 436.5,459 444.5,462 452.5,457 460.5,453 468.5,480 476.5,427 484.5,405 492.5,439 500.5,419 508.5,413 516.5,393 524.5,419 532.5,466 540.5,498 548.5,461 556.5,520 564.5,516 572.5,509 580.5,513 588.5,529 596.5,512 604.5,520 612.5,504 620.5,520 628.5,480 636.5,451 644.5,445 652.5,436 660.5,427 668.5,430 676.5,468 684.5,506.5 692.5,530 700.5,512 708.5,470 716.5,450 724.5,432 732.5,390" fill="none" stroke="#00ffff" stroke-width="2" stroke-linejoin="round" shape-rendering="crispEdges"/></g><g shape-rendering="crispEdges"><rect x="11" y="34" width="728" height="1" fill="#fff"/><rect x="11" y="379" width="728" height="1" fill="#fff"/><rect x="11" y="34" width="1" height="346" fill="#fff"/><rect x="738" y="34" width="1" height="346" fill="#fff"/><rect x="11" y="381" width="728" height="1" fill="#fff"/><rect x="11" y="552" width="728" height="1" fill="#fff"/><rect x="11" y="381" width="1" height="172" fill="#fff"/><rect x="738" y="381" width="1" height="172" fill="#fff"/><rect x="739" y="45" width="2" height="1" fill="#fff"/><rect x="739" y="78" width="2" height="1" fill="#fff"/><rect x="739" y="111" width="2" height="1" fill="#fff"/><rect x="739" y="144" width="2" height="1" fill="#fff"/><rect x="739" y="177" width="2" height="1" fill="#fff"/><rect x="739" y="210" width="2" height="1" fill="#fff"/><rect x="739" y="243" width="2" height="1" fill="#fff"/><rect x="739" y="276" width="2" height="1" fill="#fff"/><rect x="739" y="309" width="2" height="1" fill="#fff"/><rect x="739" y="343" width="2" height="1" fill="#fff"/><rect x="739" y="376" width="2" height="1" fill="#fff"/><rect x="739" y="383" width="2" height="1" fill="#fff"/><rect x="12" y="553" width="1" height="3" fill="#fff"/><rect x="76" y="553" width="1" height="3" fill="#fff"/><rect x="140" y="553" width="1" height="3" fill="#fff"/><rect x="204" y="553" width="1" height="3" fill="#fff"/><rect x="268" y="553" width="1" height="3" fill="#fff"/><rect x="332" y="553" width="1" height="3" fill="#fff"/><rect x="396" y="553" width="1" height="3" fill="#fff"/><rect x="460" y="553" width="1" height="3" fill="#fff"/><rect x="524" y="553" width="1" height="3" fill="#fff"/><rect x="588" y="553" width="1" height="3" fill="#fff"/><rect x="652" y="553" width="1" height="3" fill="#fff"/><rect x="716" y="553" width="1" height="3" fill="#fff"/></g><path d="M12,547 L12,552 L17,552 Z" fill="#778899"/><g font-family="Liberation Sans" font-size="10" fill="#ffffff"><text x="743.5" y="49" textLength="33" lengthAdjust="spacingAndGlyphs">1.21800</text><text x="743.5" y="82" textLength="33" lengthAdjust="spacingAndGlyphs">1.21655</text><text x="743.5" y="115" textLength="33" lengthAdjust="spacingAndGlyphs">1.21510</text><text x="743.5" y="148" textLength="33" lengthAdjust="spacingAndGlyphs">1.21370</text><text x="743.5" y="181" textLength="33" lengthAdjust="spacingAndGlyphs">1.21225</text><text x="743.5" y="214" textLength="33" lengthAdjust="spacingAndGlyphs">1.21080</text><text x="743.5" y="247" textLength="33" lengthAdjust="spacingAndGlyphs">1.20940</text><text x="743.5" y="280" textLength="33" lengthAdjust="spacingAndGlyphs">1.20795</text><text x="743.5" y="313" textLength="33" lengthAdjust="spacingAndGlyphs">1.20650</text><text x="743.5" y="347" textLength="33" lengthAdjust="spacingAndGlyphs">1.20505</text><text x="743.5" y="380" textLength="33" lengthAdjust="spacingAndGlyphs">1.20360</text><text x="741.5" y="392" textLength="6" lengthAdjust="spacingAndGlyphs">0</text><text x="740.3" y="420" textLength="14" lengthAdjust="spacingAndGlyphs">-20</text><text x="740.3" y="454" textLength="14" lengthAdjust="spacingAndGlyphs">-40</text><text x="740.3" y="471" textLength="14" lengthAdjust="spacingAndGlyphs">-50</text><text x="740.3" y="488" textLength="14" lengthAdjust="spacingAndGlyphs">-60</text><text x="740.3" y="522" textLength="14" lengthAdjust="spacingAndGlyphs">-80</text><text x="740.3" y="550" textLength="19.5" lengthAdjust="spacingAndGlyphs">-100</text><text x="11" y="565" textLength="46.5" lengthAdjust="spacingAndGlyphs">1 Dec 2020</text><text x="75" y="565" textLength="50.5" lengthAdjust="spacingAndGlyphs">2 Dec 05:00</text><text x="139" y="565" textLength="50.5" lengthAdjust="spacingAndGlyphs">2 Dec 13:00</text><text x="203" y="565" textLength="50.5" lengthAdjust="spacingAndGlyphs">2 Dec 21:00</text><text x="267" y="565" textLength="50.5" lengthAdjust="spacingAndGlyphs">3 Dec 05:00</text><text x="331" y="565" textLength="50.5" lengthAdjust="spacingAndGlyphs">3 Dec 13:00</text><text x="395" y="565" textLength="50.5" lengthAdjust="spacingAndGlyphs">3 Dec 21:00</text><text x="459" y="565" textLength="50.5" lengthAdjust="spacingAndGlyphs">4 Dec 05:00</text><text x="523" y="565" textLength="50.5" lengthAdjust="spacingAndGlyphs">4 Dec 13:00</text><text x="587" y="565" textLength="50.5" lengthAdjust="spacingAndGlyphs">4 Dec 21:00</text><text x="651" y="565" textLength="50.5" lengthAdjust="spacingAndGlyphs">7 Dec 05:00</text><text x="715" y="565" textLength="50.5" lengthAdjust="spacingAndGlyphs">7 Dec 13:00</text><text x="26.8" y="46" textLength="54.5" lengthAdjust="spacingAndGlyphs">EURUSD,H1</text><text x="87.5" y="46" textLength="33.5" lengthAdjust="spacingAndGlyphs">1.16426</text><text x="122.3" y="46" textLength="33.5" lengthAdjust="spacingAndGlyphs">1.16453</text><text x="158.5" y="46" textLength="33.5" lengthAdjust="spacingAndGlyphs">1.16392</text><text x="193.6" y="46" textLength="33.5" lengthAdjust="spacingAndGlyphs">1.16443</text><text x="16" y="395" textLength="65.5" lengthAdjust="spacingAndGlyphs">%R(9) -31.3609</text></g><path d="M15,41 L22,41 L18.5,45 Z" fill="#ffffff"/>
</svg>
</body></html>
